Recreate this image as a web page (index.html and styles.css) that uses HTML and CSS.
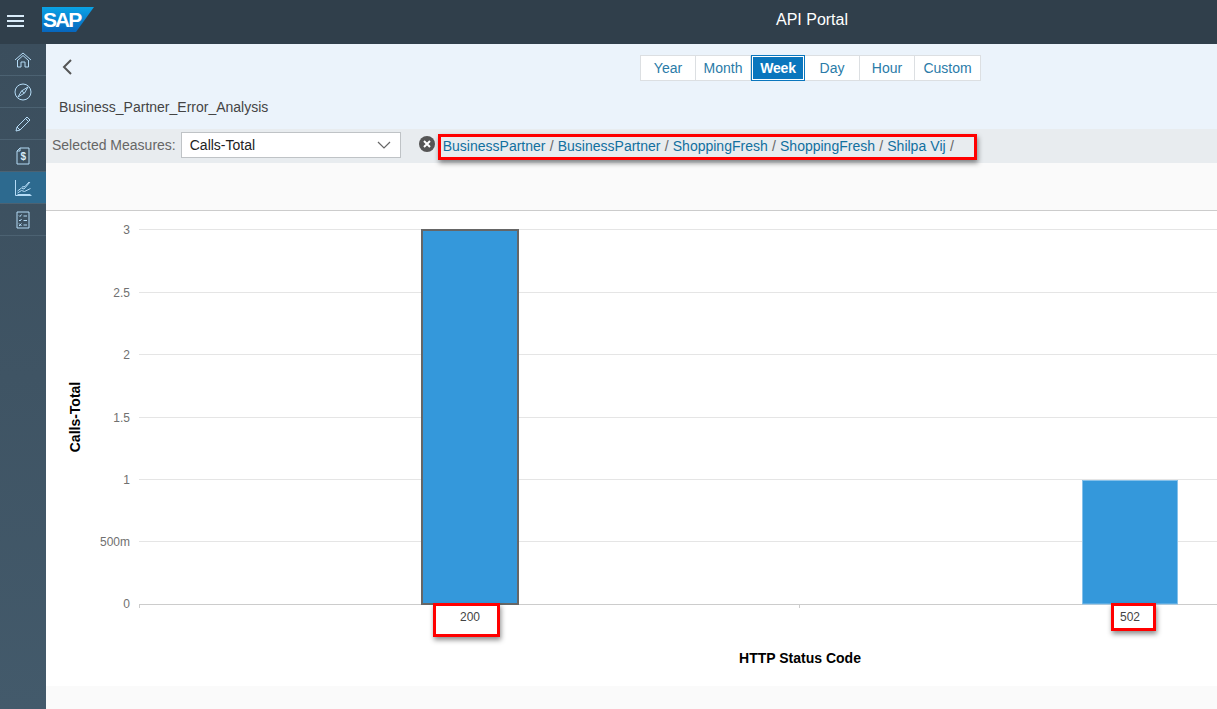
FILE: index.html
```html
<!DOCTYPE html>
<html lang="en">
<head>
    <meta charset="UTF-8">
    <meta name="viewport" content="width=device-width, initial-scale=1.0">
    <title>API Portal</title>
    <link rel="stylesheet" href="styles.css">
</head>
<body>
    <header class="shell-header">
        <div class="menu-btn"><span></span><span></span><span></span></div>
        <div class="logo">
            <svg width="52" height="25" viewBox="0 0 52 25">
                <defs>
                    <linearGradient id="sap-blue" x1="0" y1="0" x2="0" y2="1">
                        <stop offset="0" stop-color="#0aa3e6"/>
                        <stop offset="1" stop-color="#0766bd"/>
                    </linearGradient>
                </defs>
                <polygon points="0,0 52,0 34,25 0,25" fill="url(#sap-blue)"/>
                <text x="1" y="20" class="logo-text">SAP</text>
            </svg>
        </div>
        <div class="shell-title">API Portal</div>
    </header>

    <div class="layout">
        <nav class="sidebar">
            <div class="nav-item">
                <svg width="18" height="18" viewBox="0 0 18 18"><path d="M1 9 9 2l8 7M3 10 9 4.500 15 10M3.500 9v7h3.500v-5h4v5h3.500V9"/></svg>
            </div>
            <div class="nav-item">
                <svg width="18" height="18" viewBox="0 0 18 18"><circle cx="9" cy="9" r="8"/><path d="M4 14 7.500 8 14 4 10.500 10zM7.500 8l3 2"/></svg>
            </div>
            <div class="nav-item">
                <svg width="18" height="18" viewBox="0 0 18 18"><path d="M2 16l1-4L13 2l3 3L6 15zM3 12l3 3M11.500 3.500l3 3"/></svg>
            </div>
            <div class="nav-item">
                <svg width="18" height="18" viewBox="0 0 18 18"><path d="M6 1h9v16H3V4zM6 1v3H3"/><text x="6.500" y="13" class="nav-glyph">$</text></svg>
            </div>
            <div class="nav-item active">
                <svg width="18" height="18" viewBox="0 0 18 18"><path d="M1.500 1v15.500h16M3.500 12l4-3 2.500 1 6-7M3.500 14l4-2.500 3 1 6-3M3.500 15.500h13M8 8l3-.5 4-4.500"/></svg>
            </div>
            <div class="nav-item">
                <svg width="18" height="18" viewBox="0 0 18 18"><path d="M3 1h12v16H3zM5 4.500l1 1 1.500-2M5 9l1 1 1.500-2M5 12.500l2.500 2.500M7.500 12.500 5 15M9.500 5H13M9.500 9.500H13M9.500 14H13"/></svg>
            </div>
        </nav>

        <main class="content">
            <section class="top-panel">
                <div class="top-row">
                    <svg class="back-icon" width="12" height="18" viewBox="0 0 12 18"><path d="M10 2 3 9l7 7"/></svg>
                    <div class="range-tabs">
                        <div class="tab tab-year">Year</div>
                        <div class="tab tab-month">Month</div>
                        <div class="tab tab-week selected">Week</div>
                        <div class="tab tab-day">Day</div>
                        <div class="tab tab-hour">Hour</div>
                        <div class="tab tab-custom">Custom</div>
                    </div>
                </div>
                <div class="report-name">Business_Partner_Error_Analysis</div>
            </section>

            <section class="measure-bar">
                <label class="measure-label">Selected Measures:</label>
                <div class="measure-select">
                    <span>Calls-Total</span>
                    <svg width="14" height="8" viewBox="0 0 14 8"><path d="M1 1l6 6 6-6"/></svg>
                </div>
                <svg class="clear-icon" width="16" height="16" viewBox="0 0 16 16">
                    <circle cx="8" cy="8" r="8"/>
                    <path d="M5 5l6 6M11 5l-6 6"/>
                </svg>
                <div class="crumbs">
                    <a>BusinessPartner</a> <i>/</i>
                    <a>BusinessPartner</a> <i>/</i>
                    <a>ShoppingFresh</a> <i>/</i>
                    <a>ShoppingFresh</a> <i>/</i>
                    <a>Shilpa Vij</a> <i>/</i>
                </div>
            </section>

            <div class="spacer-band"></div>

            <section class="chart-area">
                <svg class="chart" width="1171" height="475" viewBox="0 0 1171 475">
                    <g class="grid">
                        <line x1="93" x2="1171" y1="18.500" y2="18.500"/>
                        <line x1="93" x2="1171" y1="81.500" y2="81.500"/>
                        <line x1="93" x2="1171" y1="143.500" y2="143.500"/>
                        <line x1="93" x2="1171" y1="206.500" y2="206.500"/>
                        <line x1="93" x2="1171" y1="268.500" y2="268.500"/>
                        <line x1="93" x2="1171" y1="330.500" y2="330.500"/>
                    </g>
                    <g class="axis">
                        <line x1="93" x2="1171" y1="393.500" y2="393.500"/>
                        <line x1="93.500" x2="93.500" y1="393" y2="397"/>
                        <line x1="753.500" x2="753.500" y1="393" y2="397"/>
                    </g>
                    <g class="y-labels">
                        <text x="84" y="23">3</text>
                        <text x="84" y="86">2.5</text>
                        <text x="84" y="148">2</text>
                        <text x="84" y="211">1.5</text>
                        <text x="84" y="273">1</text>
                        <text x="84" y="335">500m</text>
                        <text x="84" y="397">0</text>
                    </g>
                    <rect class="bar bar-picked" x="376" y="19" width="96" height="374"/>
                    <rect class="bar" x="1036.500" y="269.500" width="95" height="123.500"/>
                    <text class="x-label" x="424" y="410">200</text>
                    <text class="x-label" x="1084" y="410">502</text>
                    <text class="axis-title" x="754" y="452" text-anchor="middle">HTTP Status Code</text>
                    <text class="axis-title" x="0" y="0" text-anchor="middle" transform="translate(34 206) rotate(-90)">Calls-Total</text>
                </svg>
            </section>

            <div class="footer-band"></div>
        </main>
    </div>

    <!-- red boxes drawn over the screenshot -->
    <div class="mark mark-crumbs"></div>
    <div class="mark mark-200"></div>
    <div class="mark mark-502"></div>
</body>
</html>
```

FILE: styles.css
```css
* {
    box-sizing: border-box;
}

html, body {
    height: 100%;
}

body {
    margin: 0;
    font-family: "Liberation Sans", Arial, sans-serif;
    position: relative;
    overflow: hidden;
    background: #fff;
}

.shell-header {
    display: flex;
    align-items: center;
    height: 44px;
    background: #303f4b;
    position: relative;
}

.menu-btn {
    display: flex;
    flex-direction: column;
    gap: 3px;
    width: 17px;
    margin-left: 7px;
    margin-top: -2px;
}

.menu-btn span {
    height: 2px;
    background: #d9ecfa;
}

.logo {
    margin-left: 18px;
    align-self: flex-start;
    margin-top: 7px;
    height: 25px;
}

.logo-text {
    font-size: 21px;
    font-weight: bold;
    fill: #fff;
    letter-spacing: -2px;
}

.shell-title {
    position: absolute;
    left: 0;
    right: 0;
    top: 11px;
    padding-left: 407px;
    text-align: center;
    color: #fff;
    font-size: 16px;
}

.layout {
    display: flex;
    height: 665px;
}

.sidebar {
    width: 46px;
    flex: none;
    background: linear-gradient(#3b4e5d, #435a6b);
}

.nav-item {
    display: flex;
    align-items: center;
    justify-content: center;
    height: 32px;
    border-bottom: 1px solid #4c6272;
}

.nav-item.active {
    background: #2d6a8f;
}

.nav-item svg {
    fill: none;
    stroke: #b4dbf6;
    stroke-width: 1;
}

.nav-glyph {
    font-size: 10px;
    font-weight: bold;
    fill: #d9ecfa;
    stroke: none;
}

.content {
    flex: 1;
    display: flex;
    flex-direction: column;
    min-width: 0;
}

.top-panel {
    height: 85px;
    background: #ebf3fb;
    padding-left: 13px;
}

.top-row {
    display: flex;
    align-items: flex-start;
    height: 55px;
}

.back-icon {
    fill: none;
    stroke: #555;
    stroke-width: 2;
    margin: 14px 0 0 2px;
}

.range-tabs {
    display: flex;
    margin: 11px 0 0 567px;
}

.tab {
    height: 26px;
    line-height: 25px;
    text-align: center;
    font-size: 14px;
    color: #2a7ba8;
    background: #fff;
    border: 1px solid #dcdfe2;
    border-left: 0;
}

.tab-year {
    width: 56px;
    border-left: 1px solid #dcdfe2;
}

.tab-month {
    width: 55px;
}

.tab-week {
    width: 54px;
}

.tab-day,
.tab-hour {
    width: 55px;
}

.tab-custom {
    width: 66px;
}

.tab.selected {
    background: #0a76bd;
    border: 1px solid #0a76bd;
    box-shadow: inset 0 0 0 1px #fff;
    color: #fff;
    font-weight: bold;
    letter-spacing: -.2px;
}

.report-name {
    font-size: 14px;
    color: #444;
}

.measure-bar {
    display: flex;
    align-items: center;
    height: 34px;
    background: #e8ecef;
    padding-left: 6px;
    padding-bottom: 2px;
}

.measure-label {
    font-size: 14px;
    color: #666;
}

.measure-select {
    display: flex;
    align-items: center;
    justify-content: space-between;
    width: 220px;
    height: 26px;
    margin-left: 5px;
    padding: 0 9px 0 8px;
    background: #fff;
    border: 1px solid #bfc3c6;
    font-size: 14px;
    color: #222;
}

.measure-select svg {
    fill: none;
    stroke: #666;
    stroke-width: 1.2;
}

.clear-icon {
    margin-left: 18px;
    margin-top: -3px;
    fill: #555;
    stroke: none;
}

.clear-icon path {
    stroke: #fff;
    stroke-width: 2;
}

.crumbs {
    margin-left: 8px;
    margin-top: 2px;
    font-size: 14px;
    white-space: nowrap;
    word-spacing: .3px;
}

.crumbs a {
    color: #11709f;
}

.crumbs i {
    font-style: normal;
    color: #666;
}

.spacer-band {
    height: 48px;
    background: #fafafa;
    border-bottom: 1px solid #ccc;
}

.chart-area {
    height: 475px;
    background: #fff;
}

.chart {
    display: block;
    font-family: "Liberation Sans", Arial, sans-serif;
}

.grid line {
    stroke: #e5e5e5;
}

.axis line {
    stroke: #ccc;
}

.y-labels text {
    font-size: 12px;
    fill: #707070;
    text-anchor: end;
}

.bar {
    fill: #3498db;
    stroke: #85c1ea;
}

.bar-picked {
    stroke: #666;
    stroke-width: 2;
}

.x-label {
    font-size: 12px;
    fill: #444;
    text-anchor: middle;
}

.axis-title {
    font-size: 14px;
    font-weight: bold;
    fill: #000;
}

.footer-band {
    flex: 1;
    background: #fafafa;
}

.mark {
    position: absolute;
    border: 3px solid #f00;
    box-shadow: 1px 3px 5px rgba(0, 0, 0, .45);
}

.mark-crumbs {
    left: 438px;
    top: 134px;
    width: 539px;
    height: 26px;
}

.mark-200 {
    left: 433px;
    top: 603px;
    width: 67px;
    height: 34px;
}

.mark-502 {
    left: 1111px;
    top: 603px;
    width: 45px;
    height: 28px;
}
```
